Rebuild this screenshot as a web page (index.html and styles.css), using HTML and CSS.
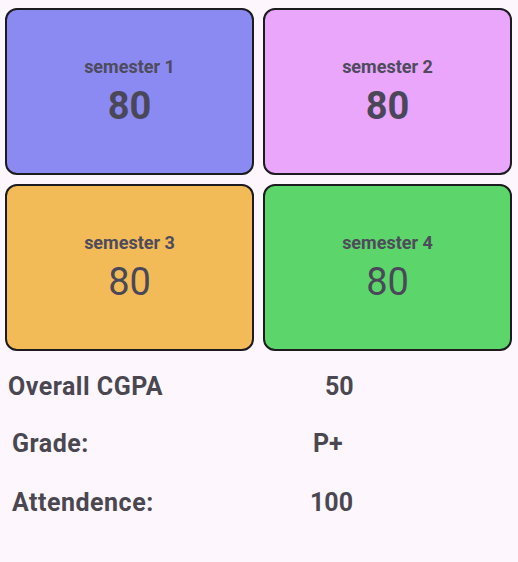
FILE: index.html
```html
<!DOCTYPE html>
<html>
<head>
    <meta charset='utf-8'>
    <title>Result</title>
    <meta name='viewport' content='width=device-width, initial-scale=1'>
    <link rel="stylesheet" href="styles.css">
</head>
<body>
<div id="screen">
    <div class="cards">
        <div class="card sem1">
            <h2 class="cardTitle">semester 1</h2>
            <p class="cardScore bold">80</p>
        </div>
        <div class="card sem2">
            <h2 class="cardTitle">semester 2</h2>
            <p class="cardScore bold">80</p>
        </div>
        <div class="card sem3">
            <h2 class="cardTitle">semester 3</h2>
            <p class="cardScore">80</p>
        </div>
        <div class="card sem4">
            <h2 class="cardTitle">semester 4</h2>
            <p class="cardScore">80</p>
        </div>
    </div>
    <div class="stats">
        <div class="statRow first">
            <span class="statLabel">Overall CGPA</span>
            <span class="statValue">50</span>
        </div>
        <div class="statRow second">
            <span class="statLabel">Grade:</span>
            <span class="statValue">P+</span>
        </div>
        <div class="statRow third">
            <span class="statLabel">Attendence:</span>
            <span class="statValue">100</span>
        </div>
    </div>
</div>
</body>
</html>
```

FILE: styles.css
```css
html, body {
    margin: 0;
    padding: 0;
    background-color: #fdf7fd;
}

#screen {
    width: 518px;
    height: 562px;
    font-family: Roboto, "Liberation Sans", sans-serif;
    color: #4a4751;
}

.cards {
    display: grid;
    grid-template-columns: 249px 249px;
    grid-auto-rows: 167px;
    gap: 9px;
    padding: 8px 0 0 5px;
}

.card {
    box-sizing: border-box;
    border: 2px solid #1c1b1f;
    border-radius: 12px;
    display: flex;
    flex-direction: column;
    align-items: center;
    justify-content: center;
}

.sem1 { background-color: #8b8af2; }
.sem2 { background-color: #e9a6fb; }
.sem3 { background-color: #f3bb58; }
.sem4 { background-color: #5cd66a; }

.cardTitle {
    margin: 0;
    font-size: 18px;
    font-weight: 700;
    line-height: 22px;
    color: #4d4b5c;
}

.cardScore {
    margin: 6px 0 0 0;
    font-size: 38px;
    line-height: 44px;
    font-weight: 400;
    color: #4a4858;
}

.cardScore.bold {
    font-weight: 700;
}

.stats {
    padding-top: 21px;
}

.statRow {
    display: flex;
    font-size: 25px;
    font-weight: 700;
    line-height: 30px;
}

.statLabel {
    flex: none;
    letter-spacing: 0.5px;
}

.first {
    padding-left: 8px;
}
.first .statLabel { width: 317px; }

.second {
    padding-left: 12px;
    margin-top: 27px;
}
.second .statLabel { width: 301px; }

.third {
    padding-left: 12px;
    margin-top: 29px;
}
.third .statLabel { width: 298px; }
```
